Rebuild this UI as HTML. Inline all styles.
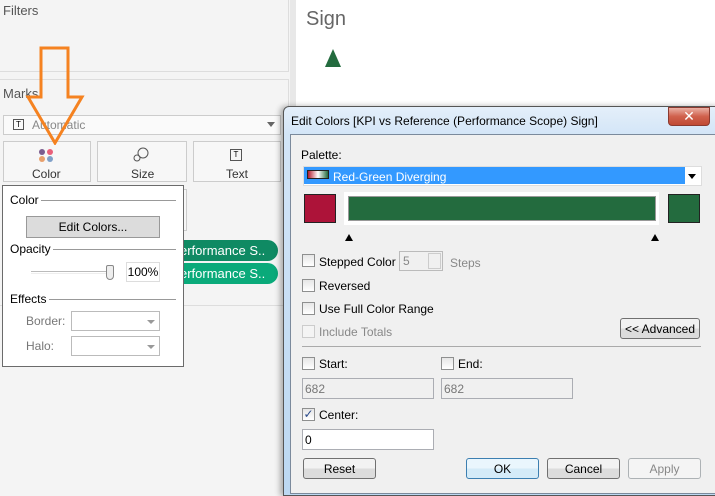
<!DOCTYPE html>
<html><head><meta charset="utf-8"><style>
*{box-sizing:border-box;margin:0;padding:0}
body{width:715px;height:490px;overflow:hidden;position:relative;background:#f4f4f4;font-family:"Liberation Sans",sans-serif;font-size:12px;color:#000}
.a{position:absolute}
.cb{position:absolute;width:13px;height:13px;border:1px solid #8e8f8f;background:linear-gradient(#e6e6e6,#fff)}
.btn{position:absolute;border:1px solid #707070;border-radius:3px;background:linear-gradient(#f2f2f2 50%,#dcdcdc 50%);text-align:center;font-size:12px;line-height:20px}
.inp{position:absolute;border:1px solid #abadb3;background:#fff;font-size:12px;padding-left:2px;line-height:20px}
</style></head><body>
<div class="a" style="left:0;top:0;width:289px;height:72px;border-right:1px solid #ddd;border-bottom:1px solid #ddd;background:#f4f4f4"></div>
<div class="a" style="left:3px;top:3px;color:#555;font-size:13px">Filters</div>
<div class="a" style="left:0;top:79px;width:289px;height:227px;border-right:1px solid #ddd;border-top:1px solid #ddd;border-bottom:1px solid #ddd"></div>
<div class="a" style="left:3px;top:86px;color:#555;font-size:13px">Marks</div>
<div class="a" style="left:3px;top:115px;width:278px;height:20px;border:1px solid #ccc;background:#fafafa"></div>
<div class="a" style="left:13px;top:119px;width:11px;height:11px;border:1px solid #555;font-size:8px;line-height:9px;text-align:center">T</div>
<div class="a" style="left:32px;top:118px;color:#888;font-size:12px">Automatic</div>
<div class="a" style="left:267px;top:122px;border:4px solid transparent;border-top:5px solid #666"></div>
<div class="a" style="left:3px;top:141px;width:88px;height:41px;border:1px solid #ccc;background:#f7f7f7"></div>
<div class="a" style="left:97px;top:141px;width:90px;height:41px;border:1px solid #ccc;background:#f7f7f7"></div>
<div class="a" style="left:193px;top:141px;width:88px;height:41px;border:1px solid #ccc;background:#f7f7f7"></div>
<div class="a" style="left:39px;top:149px;width:6px;height:6px;border-radius:3px;background:#7b5c8e"></div>
<div class="a" style="left:47px;top:149px;width:6px;height:6px;border-radius:3px;background:#e9607a"></div>
<div class="a" style="left:39px;top:156px;width:6px;height:6px;border-radius:3px;background:#e8a06c"></div>
<div class="a" style="left:47px;top:156px;width:6px;height:6px;border-radius:3px;background:#7fa0c8"></div>
<div class="a" style="left:32px;top:167px;color:#333;font-size:12px">Color</div>
<svg class="a" style="left:133px;top:147px" width="17" height="15"><circle cx="10" cy="6" r="5" fill="none" stroke="#555"/><circle cx="4" cy="11" r="3" fill="none" stroke="#555"/></svg>
<div class="a" style="left:131px;top:167px;color:#333">Size</div>
<div class="a" style="left:230px;top:149px;width:12px;height:12px;border:1px solid #555;font-size:8px;line-height:10px;text-align:center">T</div>
<div class="a" style="left:226px;top:167px;color:#333">Text</div>
<div class="a" style="left:150px;top:189px;width:37px;height:42px;border:1px solid #ccc;background:#f7f7f7"></div>
<div class="a" style="left:160px;top:240px;width:118px;height:21px;border-radius:0 11px 11px 0;background:#0f8a63;color:#fff;font-size:13px;line-height:21px;padding-left:20px;overflow:hidden;white-space:nowrap">erformance S..</div>
<div class="a" style="left:160px;top:263px;width:118px;height:21px;border-radius:0 11px 11px 0;background:#0aaa7a;color:#fff;font-size:13px;line-height:21px;padding-left:20px;overflow:hidden;white-space:nowrap">erformance S..</div>
<div class="a" style="left:2px;top:185px;width:182px;height:182px;border:1px solid #6b6b6b;background:#fff"></div>
<div class="a" style="left:10px;top:193px">Color</div><div class="a" style="left:41px;top:200px;width:135px;height:1px;background:#999"></div>
<div class="a" style="left:26px;top:216px;width:134px;height:22px;border:1px solid #999;background:#dcdcdc;text-align:center;line-height:20px">Edit Colors...</div>
<div class="a" style="left:10px;top:242px">Opacity</div><div class="a" style="left:53px;top:249px;width:123px;height:1px;background:#999"></div>
<div class="a" style="left:31px;top:271px;width:80px;height:3px;border-top:1px solid #bbb;border-bottom:1px solid #eee"></div>
<div class="a" style="left:106px;top:265px;width:8px;height:15px;border:1px solid #888;border-radius:2px 2px 4px 4px;background:#eee"></div>
<div class="a" style="left:126px;top:262px;width:34px;height:20px;border:1px solid #ddd;text-align:center;line-height:18px">100%</div>
<div class="a" style="left:10px;top:292px">Effects</div><div class="a" style="left:49px;top:299px;width:127px;height:1px;background:#999"></div>
<div class="a" style="left:26px;top:314px;color:#777">Border:</div>
<div class="a" style="left:71px;top:311px;width:89px;height:20px;border:1px solid #bbb"></div>
<div class="a" style="left:26px;top:339px;color:#777">Halo:</div>
<div class="a" style="left:71px;top:336px;width:89px;height:20px;border:1px solid #bbb"></div>
<div class="a" style="left:147px;top:320px;border:4px solid transparent;border-top:4px solid #999"></div>
<div class="a" style="left:147px;top:345px;border:4px solid transparent;border-top:4px solid #999"></div>
<svg class="a" style="left:25px;top:45px" width="60" height="100"><path d="M16 3 H43 V52 H57 L30 98 L3 52 H16 Z" fill="none" stroke="#f58220" stroke-width="3"/></svg>
<div class="a" style="left:290px;top:0;width:6px;height:490px;background:#e8e8e8"></div>
<div class="a" style="left:296px;top:0;width:419px;height:490px;background:#fff"></div>
<div class="a" style="left:306px;top:8px;font-size:20px;color:#666">Sign</div>
<div class="a" style="left:325px;top:49px;border-left:8px solid transparent;border-right:8px solid transparent;border-bottom:18px solid #236b3e"></div>
<div class="a" style="left:283px;top:106px;width:440px;height:390px;box-shadow:-3px 0 6px rgba(0,0,0,.3);border:1px solid #555;border-radius:6px 6px 0 0;background:linear-gradient(#e4effa,#d3e5f7 28px,#bcd8f2);"></div>
<div class="a" style="left:291px;top:114px;font-size:12px;color:#000">Edit Colors [KPI vs Reference (Performance Scope) Sign]</div>
<div class="a" style="left:668px;top:107px;width:42px;height:19px;border:1px solid #8a3a30;border-radius:0 0 4px 4px;background:linear-gradient(#eab0a4,#d0604c 50%,#c04a34);color:#fff;font-size:14px;text-align:center;line-height:16px">✕</div>
<div class="a" style="left:290px;top:134px;width:430px;height:360px;border:1px solid #7b8a9c;background:#f0f0f0"></div>
<div class="a" style="left:301px;top:148px">Palette:</div>
<div class="a" style="left:303px;top:166px;width:399px;height:20px;background:#fff;border:1px solid #ddd"></div>
<div class="a" style="left:304px;top:167px;width:381px;height:17px;background:#3399ff"></div>
<div class="a" style="left:307px;top:170px;width:22px;height:9px;border:1px solid #222;background:linear-gradient(90deg,#b01c30,#fff,#236b3e)"></div>
<div class="a" style="left:333px;top:170px;color:#fff">Red-Green Diverging</div>
<div class="a" style="left:688px;top:174px;border:4px solid transparent;border-top:5px solid #000"></div>
<div class="a" style="left:304px;top:194px;width:32px;height:29px;border:1px solid #222;background:#ad1339"></div>
<div class="a" style="left:344px;top:192px;width:315px;height:33px;background:#fff"></div>
<div class="a" style="left:348px;top:196px;width:308px;height:25px;border:1px solid #999;background:#236b3e"></div>
<div class="a" style="left:668px;top:194px;width:32px;height:29px;border:1px solid #222;background:#236b3e"></div>
<div class="a" style="left:345px;top:234px;border:4px solid transparent;border-bottom:7px solid #000;border-top:0"></div>
<div class="a" style="left:651px;top:234px;border:4px solid transparent;border-bottom:7px solid #000;border-top:0"></div>
<div class="cb" style="left:302px;top:254px"></div><div class="a" style="left:319px;top:255px">Stepped Color</div>
<div class="a" style="left:399px;top:251px;width:44px;height:20px;border:1px solid #bbb;color:#888;padding-left:3px;line-height:18px">5</div>
<div class="a" style="left:428px;top:253px;width:13px;height:16px;border:1px solid #ccc"></div>
<div class="a" style="left:450px;top:256px;color:#888">Steps</div>
<div class="cb" style="left:302px;top:279px"></div><div class="a" style="left:319px;top:279px">Reversed</div>
<div class="cb" style="left:302px;top:302px"></div><div class="a" style="left:319px;top:302px">Use Full Color Range</div>
<div class="cb" style="left:302px;top:325px;border-color:#ccc;background:#f4f4f4"></div><div class="a" style="left:319px;top:325px;color:#888">Include Totals</div>
<div class="btn" style="left:620px;top:318px;width:80px;height:21px">&lt;&lt; Advanced</div>
<div class="a" style="left:302px;top:346px;width:399px;height:1px;background:#aaa"></div>
<div class="cb" style="left:302px;top:357px"></div><div class="a" style="left:319px;top:357px">Start:</div>
<div class="cb" style="left:441px;top:357px"></div><div class="a" style="left:458px;top:357px">End:</div>
<div class="inp" style="left:302px;top:378px;width:132px;height:21px;background:#f0f0f0;color:#777">682</div>
<div class="inp" style="left:441px;top:378px;width:132px;height:21px;background:#f0f0f0;color:#777">682</div>
<div class="cb" style="left:302px;top:408px;color:#2a4a8a;font-size:12px;line-height:11px;text-align:center">✓</div><div class="a" style="left:319px;top:408px">Center:</div>
<div class="inp" style="left:302px;top:429px;width:132px;height:21px">0</div>
<div class="btn" style="left:303px;top:458px;width:73px;height:21px">Reset</div>
<div class="btn" style="left:466px;top:458px;width:73px;height:21px;border-color:#3c7fb1;background:linear-gradient(#eaf6fd 50%,#d4ebf8 50%)">OK</div>
<div class="btn" style="left:547px;top:458px;width:73px;height:21px">Cancel</div>
<div class="btn" style="left:628px;top:458px;width:73px;height:21px;border-color:#adb2b5;background:#f4f4f4;color:#888">Apply</div>
</body></html>
